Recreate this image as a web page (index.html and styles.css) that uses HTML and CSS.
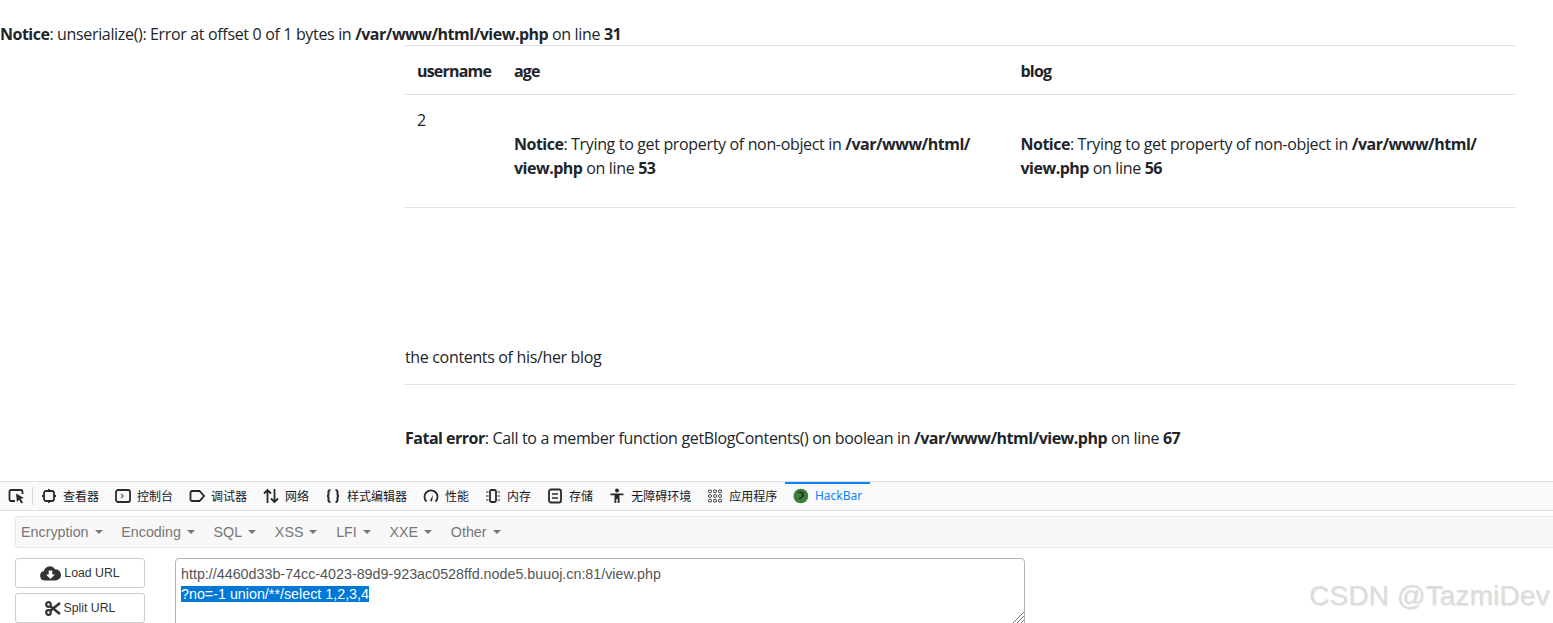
FILE: index.html
```html
<!DOCTYPE html>
<html lang="zh">
<head>
<meta charset="utf-8">
<title>view.php</title>
<link rel="stylesheet" href="styles.css">
</head>
<body>
<main class="page">
  <p class="php-notice"><b>Notice</b>: unserialize(): Error at offset 0 of 1 bytes in <b>/var/www/html/view.php</b> on line <b>31</b></p>
  <div class="content">
    <table class="table">
      <thead>
        <tr><th class="c1">username</th><th class="c2">age</th><th class="c3">blog</th></tr>
      </thead>
      <tbody>
        <tr>
          <td>2</td>
          <td><br><b>Notice</b>: Trying to get property of non-object in <b>/var/www/html/<br>view.php</b> on line <b>53</b><br><br></td>
          <td><br><b>Notice</b>: Trying to get property of non-object in <b>/var/www/html/<br>view.php</b> on line <b>56</b><br><br></td>
        </tr>
      </tbody>
    </table>
    <p class="contents">the contents of his/her blog</p>
    <hr class="rule">
    <p class="fatal"><b>Fatal error</b>: Call to a member function getBlogContents() on boolean in <b>/var/www/html/view.php</b> on line <b>67</b></p>
  </div>
</main>
<section class="devtools">
  <nav class="tabs">
    <span class="picker">
      <svg width="18" height="16" viewBox="0 0 18 16"><path d="M7 13H3a1.500 1.500 0 0 1-1.500-1.500v-8A1.500 1.500 0 0 1 3 2h10a1.500 1.500 0 0 1 1.500 1.500V6" fill="none" stroke="#2a2a2e" stroke-width="1.800"/><path d="M8 5.500l8 4.500-3.300.8 2.300 3.700-1.700 1-2.200-3.800-2.200 2.300z" fill="#2a2a2e"/></svg>
    </span>
    <span class="tab"><svg width="16" height="16" viewBox="0 0 16 16"><rect x="3" y="3" width="10" height="10" rx="2" fill="none" stroke="#2a2a2e" stroke-width="1.800"/><path d="M8 1v2M8 13v2M1 8h2M13 8h2" stroke="#2a2a2e" stroke-width="1.800"/></svg>查看器</span>
    <span class="tab"><svg width="16" height="16" viewBox="0 0 16 16"><rect x="1" y="2" width="14" height="12" rx="2" fill="none" stroke="#2a2a2e" stroke-width="1.800"/><path d="M6 6l2.500 2L6 10" fill="none" stroke="#2a2a2e"/></svg>控制台</span>
    <span class="tab"><svg width="16" height="16" viewBox="0 0 16 16"><path d="M3 3h7.500L15 8l-4.500 5H3a1.500 1.500 0 0 1-1.500-1.500v-7A1.500 1.500 0 0 1 3 3z" fill="none" stroke="#2a2a2e" stroke-width="1.800"/></svg>调试器</span>
    <span class="tab"><svg width="16" height="16" viewBox="0 0 16 16"><path d="M4.500 15V2M1 5.500L4.500 2 8 5.500M11.500 1v13M8 10.500l3.500 3.500 3.500-3.500" fill="none" stroke="#2a2a2e" stroke-width="1.800"/></svg>网络</span>
    <span class="tab"><svg width="16" height="16" viewBox="0 0 16 16"><path d="M5.500 2C3 2 3.500 4 3.500 6S2 8 2 8s1.500 0 1.500 2S3 14 5.500 14M10.500 2c2.500 0 2 2 2 4S14 8 14 8s-1.500 0-1.500 2 .5 4-2 4" fill="none" stroke="#2a2a2e" stroke-width="2"/></svg>样式编辑器</span>
    <span class="tab"><svg width="16" height="16" viewBox="0 0 16 16"><path d="M3.500 13.500a6.500 6.500 0 1 1 9 0" fill="none" stroke="#2a2a2e" stroke-width="1.800"/><path d="M7 12.500L10 7l-1 6.500z" fill="#2a2a2e"/></svg>性能</span>
    <span class="tab"><svg width="16" height="16" viewBox="0 0 16 16"><rect x="5" y="2" width="6" height="12" rx="1.500" fill="none" stroke="#2a2a2e" stroke-width="1.800"/><path d="M1 4h2.500M1 8h2.500M1 12h2.500M12.500 4H15M12.500 8H15M12.500 12H15" stroke="#2a2a2e"/></svg>内存</span>
    <span class="tab"><svg width="16" height="16" viewBox="0 0 16 16"><rect x="2" y="1.500" width="12" height="13" rx="2" fill="none" stroke="#2a2a2e" stroke-width="1.800"/><path d="M5 6h6M5 10h6" stroke="#2a2a2e" stroke-width="1.500"/></svg>存储</span>
    <span class="tab"><svg width="16" height="16" viewBox="0 0 16 16"><circle cx="8" cy="2.500" r="2" fill="#2a2a2e"/><path d="M1.500 5.500h13v1.800H10.500V15H8.700v-4H7.300v4H5.500V7.300H1.500z" fill="#2a2a2e"/></svg>无障碍环境</span>
    <span class="tab"><svg width="16" height="16" viewBox="0 0 16 16" fill="none" stroke="#2a2a2e"><rect x="1.500" y="2" width="3" height="2.600" rx="1"/><rect x="6.500" y="2" width="3" height="2.600" rx="1"/><rect x="11.500" y="2" width="3" height="2.600" rx="1"/><rect x="1.500" y="6.700" width="3" height="2.600" rx="1"/><rect x="6.500" y="6.700" width="3" height="2.600" rx="1"/><rect x="11.500" y="6.700" width="3" height="2.600" rx="1"/><rect x="1.500" y="11.400" width="3" height="2.600" rx="1"/><rect x="6.500" y="11.400" width="3" height="2.600" rx="1"/><rect x="11.500" y="11.400" width="3" height="2.600" rx="1"/></svg>应用程序</span>
    <span class="tab tab-active"><svg width="16" height="16" viewBox="0 0 16 16"><circle cx="8" cy="8" r="7.500" fill="#3f7d3c"/><path d="M4 5c2-2 6-2 7 0 1 2 0 5-3 6-1 0-2 0-3-1 2 0 4-1 4-3S6 5 4 5z" fill="#1f3d1e"/></svg>HackBar</span>
  </nav>
  <div class="hackbar">
    <div class="menu">
      <span class="menu-item">Encryption<i class="caret"></i></span>
      <span class="menu-item">Encoding<i class="caret"></i></span>
      <span class="menu-item">SQL<i class="caret"></i></span>
      <span class="menu-item">XSS<i class="caret"></i></span>
      <span class="menu-item">LFI<i class="caret"></i></span>
      <span class="menu-item">XXE<i class="caret"></i></span>
      <span class="menu-item">Other<i class="caret"></i></span>
    </div>
    <div class="work">
      <div class="actions">
        <button class="btn" type="button"><svg width="21" height="16" viewBox="0 0 21 16"><path d="M5 15.500a4.800 4.800 0 0 1-1-9.500A6 6 0 0 1 15 4.300a5.600 5.600 0 0 1 .8 11.200z" fill="#333"/><path d="M8.700 5.500h3.600v4H15l-4.500 4.500L6 9.500h2.700z" fill="#fff"/></svg>Load URL</button>
        <button class="btn" type="button"><svg width="16" height="15" viewBox="0 0 16 15"><circle cx="3.500" cy="3.500" r="2.300" fill="none" stroke="#333" stroke-width="2.200"/><circle cx="3.500" cy="11.500" r="2.300" fill="none" stroke="#333" stroke-width="2.200"/><path d="M5 5l10 8M5 10L15 2" stroke="#333" stroke-width="2.600"/></svg>Split URL</button>
      </div>
      <div class="url">
        <div>http://4460d33b-74cc-4023-89d9-923ac0528ffd.node5.buuoj.cn:81/view.php</div>
        <div><span class="sel">?no=-1 union/**/select 1,2,3,4</span></div>
        <svg class="grip" width="13" height="13" viewBox="0 0 13 13"><path d="M1 13L13 1M5 13l8-8M9 13l4-4" stroke="#777" fill="none"/></svg>
      </div>
    </div>
  </div>
  <span class="mark">CSDN @TazmiDev</span>
</section>
</body>
</html>
```

FILE: styles.css
```css
* { box-sizing: border-box; }
html, body { margin: 0; height: 623px; overflow: hidden; background: #fff; }
body { font-family: "Open Sans", "Noto Sans", sans-serif; font-size: 16px; line-height: 24px; color: #212529; }
b { font-weight: 700; letter-spacing: -.5px; }
.page { height: 481px; overflow: hidden; padding-top: 22px; }
.php-notice { margin: 0; height: 23px; letter-spacing: -.34px; white-space: nowrap; }
.content { margin-left: 405px; width: 1110px; letter-spacing: -.34px; }
.table { width: 100%; border-collapse: collapse; table-layout: fixed; }
.table th { text-align: left; font-weight: 700; letter-spacing: -.8px; padding: 13px 12px 11px; height: 49px; border-top: 1px solid #dee2e6; border-bottom: 1px solid #dee2e6; }
.table td { padding: 13px 12px 3px; vertical-align: top; border-bottom: 1px solid #dee2e6; }
.c1 { width: 97px; }
.c2 { width: 506.500px; }
.contents { margin: 137px 0 0; height: 24px; }
.rule { margin: 15px 0 0; border: 0; border-top: 1px solid #dee2e6; }
.fatal { margin: 41px 0 0; }
.devtools { position: relative; height: 142px; overflow: hidden; background: #fff; border-top: 1px solid #e0e0e2; }
.tabs { display: flex; align-items: stretch; height: 29px; background: #f9f9fa; border-bottom: 1px solid #e0e0e2; font-family: "Noto Sans CJK SC", "Noto Sans", sans-serif; font-size: 12px; line-height: 28px; color: #18181a; }
.picker { display: flex; align-items: center; padding-left: 8px; width: 33px; position: relative; }
.picker::after { content: ""; position: absolute; right: 0; top: 5px; height: 18px; border-right: 1px solid #d7d7db; }
.tab { display: flex; align-items: center; gap: 6px; padding: 0 8px; white-space: nowrap; }
.tab-active { color: #0a84ff; box-shadow: inset 0 2px 0 #0a84ff; padding: 0 8px; width: 85px; font-family: "Noto Sans", sans-serif; }
.hackbar { padding: 5px 0 0 15px; font-family: "Liberation Sans", sans-serif; }
.menu { display: flex; height: 32px; align-items: center; gap: 18.700px; padding-left: 5px; background: #f8f8f8; border: 1px solid #e7e7e7; border-right: 0; border-radius: 4px 0 0 4px; font-size: 14.300px; color: #777; }
.menu-item { display: flex; align-items: center; gap: 6px; white-space: nowrap; }
.caret { width: 0; height: 0; border-top: 4px solid #777; border-left: 4px solid transparent; border-right: 4px solid transparent; }
.work { display: flex; gap: 30px; margin-top: 10px; }
.actions { display: flex; flex-direction: column; gap: 5px; width: 130px; }
.btn { display: flex; align-items: center; justify-content: center; gap: 3px; width: 130px; height: 30px; padding: 0; background: #fff; border: 1px solid #ccc; border-radius: 3px; font: 12.300px "Liberation Sans", sans-serif; color: #333; }
.url { position: relative; width: 850px; height: 100px; padding: 5px 5px; border: 1px solid #b5b5b5; border-radius: 4px; font-size: 14.300px; line-height: 20px; color: #555; }
.sel { background: #0078d7; color: #fff; }
.grip { position: absolute; right: 0; top: 52px; }
.mark { position: absolute; left: 1309px; top: 98px; font: 28px "Liberation Sans", sans-serif; line-height: 32px; letter-spacing: .15px; color: #dcdcdc; text-shadow: 1px 1px 1px #e8e8e8; white-space: nowrap; }
```
